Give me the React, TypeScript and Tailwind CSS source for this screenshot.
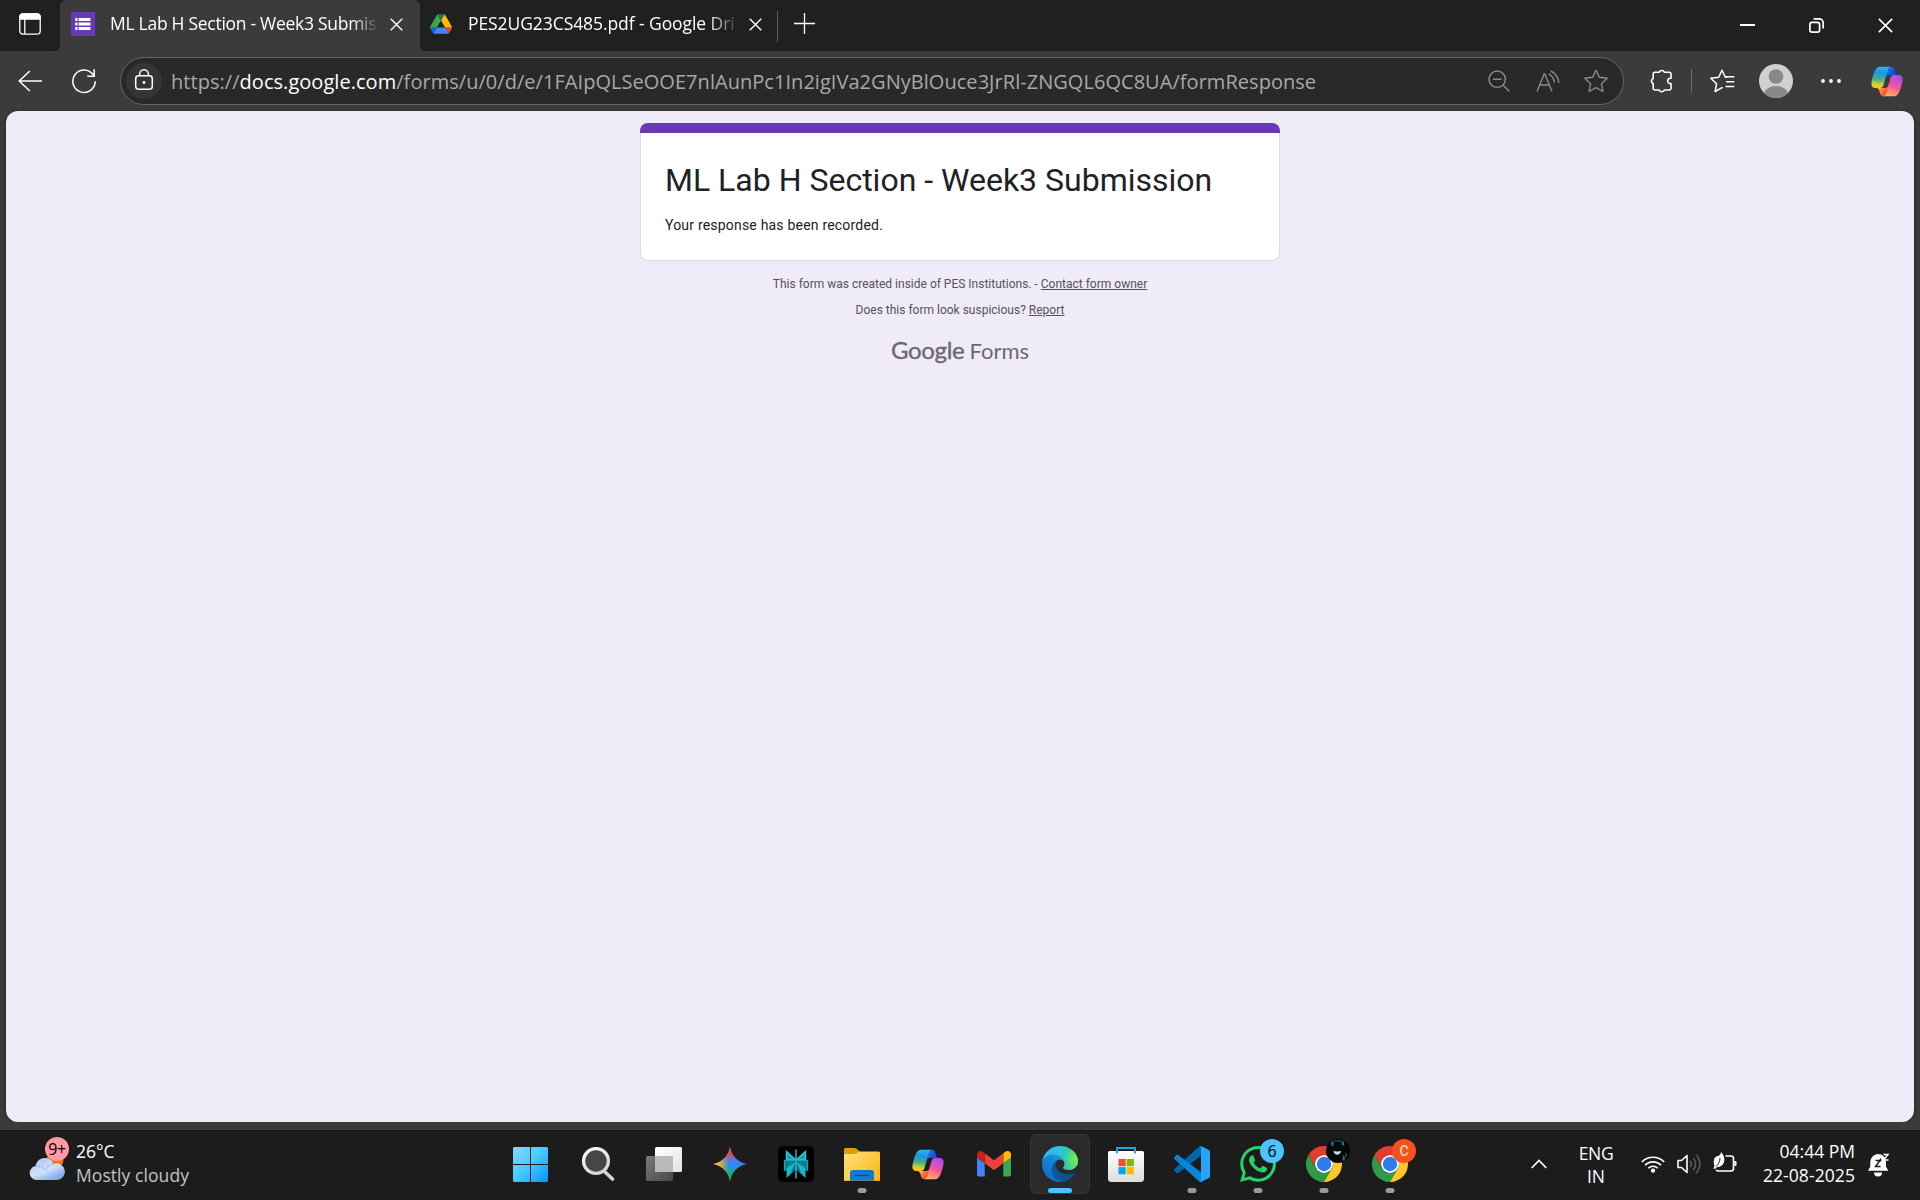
import type { ReactNode } from "react";
import { SiWhatsapp } from "react-icons/si";

const UI_FONT = "font-['Open_Sans','Noto_Sans',sans-serif]";

/* ---------- shared logos ---------- */

function CopilotLogo({ id, className }: { id: string; className: string }) {
  return (
    <svg viewBox="0 3 48 42" preserveAspectRatio="none" className={className}>
      <defs>
        <linearGradient id={`${id}a`} x1="38" y1="17" x2="25" y2="6" gradientUnits="userSpaceOnUse">
          <stop offset="0" stopColor="#1b2fc4" />
          <stop offset="0.5" stopColor="#1456e0" />
          <stop offset="1" stopColor="#2076ee" />
        </linearGradient>
        <linearGradient id={`${id}b`} x1="12" y1="33" x2="24" y2="43" gradientUnits="userSpaceOnUse">
          <stop offset="0" stopColor="#ffb657" />
          <stop offset="0.5" stopColor="#ff6b3d" />
          <stop offset="1" stopColor="#e8343c" />
        </linearGradient>
        <linearGradient id={`${id}c`} x1="16" y1="4" x2="12" y2="33" gradientUnits="userSpaceOnUse">
          <stop offset="0" stopColor="#25b8f5" />
          <stop offset="0.3" stopColor="#1d93e8" />
          <stop offset="0.6" stopColor="#46b27c" />
          <stop offset="0.85" stopColor="#d8d02e" />
          <stop offset="1" stopColor="#fcc414" />
        </linearGradient>
        <linearGradient id={`${id}d`} x1="40" y1="14" x2="28" y2="44" gradientUnits="userSpaceOnUse">
          <stop offset="0" stopColor="#9a4df2" />
          <stop offset="0.25" stopColor="#c44fd8" />
          <stop offset="0.55" stopColor="#f4569a" />
          <stop offset="0.85" stopColor="#ff8f78" />
          <stop offset="1" stopColor="#ffb266" />
        </linearGradient>
      </defs>
      <path fill={`url(#${id}a)`} d="M34.14 7.33C33.56 5.35 31.75 4 29.7 4h-1.35c-2.23 0-4.15 1.6-4.55 3.79l-2.32 12.62.57-1.97c.58-1.97 2.39-3.32 4.44-3.32h7.86l3.29 1.28 3.17-1.28h-.92c-2.06 0-3.87-1.36-4.45-3.33z" />
      <path fill={`url(#${id}b)`} d="M14.33 40.66C14.9 42.64 16.72 44 18.78 44h2.87c2.51 0 4.56-2 4.63-4.51l.31-12.16-.65 2.23c-.58 1.97-2.39 3.32-4.45 3.32h-7.92l-2.82-1.53-3.06 1.53h.91c2.07 0 3.88 1.37 4.45 3.35z" />
      <path fill={`url(#${id}c)`} d="M29.5 4H13.46C8.88 4 6.13 10.06 4.29 16.11 2.12 23.29-.72 32.89 7.5 32.89h6.93c2.07 0 3.88-1.37 4.45-3.36 1.2-4.21 3.31-11.56 4.97-17.16.84-2.84 1.54-5.29 2.62-6.81C27.07 4.71 28.08 4 29.5 4z" />
      <path fill={`url(#${id}d)`} d="M18.5 44h16.04c4.58 0 7.33-6.06 9.16-12.12 2.17-7.17 5.02-16.77-3.2-16.77h-6.93c-2.07 0-3.89 1.37-4.46 3.36-1.2 4.21-3.31 11.56-4.96 17.16-.84 2.84-1.55 5.29-2.62 6.81C20.93 43.29 19.92 44 18.5 44z" />
    </svg>
  );
}

function ChromeLogo() {
  return (
    <svg viewBox="0 0 48 48" className="size-9">
      <path fill="#e33b2e" d="M24 12H44.78A24 24 0 0 0 3.22 12L13.6 30A12 12 0 0 1 24 12z" />
      <path fill="#2f9b48" d="M13.6 30L3.22 12A24 24 0 0 0 24 48L34.39 30A12 12 0 0 1 13.6 30z" />
      <path fill="#fcc72b" d="M34.39 30L24 48A24 24 0 0 0 44.78 12H24A12 12 0 0 1 34.39 30z" />
      <circle cx="24" cy="24" r="12" fill="#fff" />
      <circle cx="24" cy="24" r="9.6" fill="#2f7bf0" />
    </svg>
  );
}

function DriveLogo() {
  return (
    <svg viewBox="0 0 87.3 78" className="h-5 w-[22px]">
      <path fill="#1967d2" d="m6.6 66.85 3.85 6.65c.8 1.4 1.95 2.5 3.3 3.3l13.75-23.8h-27.5c0 1.55.4 3.1 1.2 4.5z" />
      <path fill="#34a853" d="m43.65 25-13.75-23.8c-1.35.8-2.5 1.9-3.3 3.3l-25.4 44a9.06 9.06 0 0 0 -1.2 4.5h27.5z" />
      <path fill="#ea4335" d="m73.55 76.8c1.35-.8 2.5-1.9 3.3-3.3l1.6-2.75 7.65-13.25c.8-1.4 1.2-2.95 1.2-4.5h-27.5l5.85 11.5z" />
      <path fill="#188038" d="m43.65 25 13.75-23.8c-1.35-.8-2.9-1.2-4.5-1.2h-18.5c-1.6 0-3.15.45-4.5 1.2z" />
      <path fill="#4285f4" d="m59.8 53h-32.3l-13.75 23.8c1.35.8 2.9 1.2 4.5 1.2h50.8c1.6 0 3.15-.45 4.5-1.2z" />
      <path fill="#fbbc04" d="m73.4 26.5-12.7-22c-.8-1.4-1.95-2.5-3.3-3.3l-13.75 23.8 16.15 28h27.45c0-1.55-.4-3.1-1.2-4.5z" />
    </svg>
  );
}

function FormsFavicon() {
  return (
    <svg viewBox="0 0 24 24" className="size-6">
      <rect width="24" height="24" fill="#673ab7" />
      <g fill="#fff">
        <rect x="4.3" y="6" width="2.2" height="3" /><rect x="7.6" y="6" width="11.8" height="3" />
        <rect x="4.3" y="10.5" width="2.2" height="3" /><rect x="7.6" y="10.5" width="11.8" height="3" />
        <rect x="4.3" y="15" width="2.2" height="3" /><rect x="7.6" y="15" width="11.8" height="3" />
      </g>
    </svg>
  );
}

/* ---------- browser chrome ---------- */

function Cross({ className }: { className: string }) {
  return (
    <svg viewBox="0 0 14 14" fill="none" stroke="#fff" strokeWidth="1.5" className={className}>
      <path d="M.8.8 13.2 13.2M13.2.8.8 13.2" />
    </svg>
  );
}

function TabStrip() {
  return (
    <div className="flex h-[51px] bg-[#3b3b3b] text-[17.5px] leading-6 text-white">
      <div className="flex w-[60px] items-start rounded-br-md bg-[#202020] pt-[13px] pl-[19px] shadow-[inset_0_-1px_0_#1a1a1a]">
        <svg viewBox="0 0 22 22" fill="none" stroke="#fff" strokeWidth="1.3" className="size-[22px]">
          <rect x=".8" y=".8" width="20.4" height="20.4" rx="3.2" />
          <path d="M1 4a3 3 0 0 1 3-3h14a3 3 0 0 1 3 3v2H1z" fill="#fff" />
          <path d="M5.8 6v15" />
        </svg>
      </div>
      <div className="w-[360px] bg-[#202020]">
        <div className="flex h-[51px] rounded-t-md bg-[#3b3b3b] pl-[11px]">
          <div className="pt-3"><FormsFavicon /></div>
          <div className="ml-[15px] w-[269px] overflow-hidden whitespace-nowrap pt-[11px] tracking-[-0.28px] [mask-image:linear-gradient(to_right,#000_242px,transparent_269px)]">
            ML Lab H Section - Week3 Submission
          </div>
          <Cross className="mt-[18px] ml-[10.5px] size-[13px]" />
        </div>
      </div>
      <div className="flex flex-1 rounded-bl-md bg-[#202020] pl-[10px] shadow-[inset_0_-1px_0_#1a1a1a]">
        <div className="pt-[14px]"><DriveLogo /></div>
        <div className="ml-4 w-[267px] overflow-hidden whitespace-nowrap pt-[11px] tracking-[-0.08px] [mask-image:linear-gradient(to_right,#000_240px,transparent_272px)]">
          PES2UG23CS485.pdf - Google Drive
        </div>
        <Cross className="mt-[18px] ml-[13.5px] size-[13px]" />
        <div className="mt-[11px] ml-[15px] h-[31px] w-px bg-[#5e5e5e]" />
        <svg viewBox="0 0 21 21" stroke="#fff" strokeWidth="1.3" className="mt-[13px] ml-[16.5px] size-[21px]">
          <path d="M10.5 0v21M0 10.5h21" />
        </svg>
        <div className="ml-auto flex pt-[18px] pr-[27px]">
          <svg viewBox="0 0 15 15" className="size-[15px]"><rect y="6" width="15" height="2" fill="#fff" /></svg>
          <svg viewBox="0 0 15 15" fill="none" stroke="#fff" strokeWidth="1.7" className="ml-[54px] size-[15px]">
            <rect x=".9" y="4.4" width="9.7" height="9.7" rx="2.2" />
            <path d="M4.6.9h5.6a4 4 0 0 1 4 4v5.5" />
          </svg>
          <Cross className="ml-[54px] size-[15px]" />
        </div>
      </div>
    </div>
  );
}

function Star({ className, color }: { className: string; color: string }) {
  return (
    <svg viewBox="0 0 24 24" fill="none" stroke={color} strokeWidth="1.4" strokeLinejoin="round" className={className}>
      <path d="M12 1.2 15.3 8.3 23.2 9.3 17.4 14.7 18.9 22.5 12 18.7 5.1 22.5 6.6 14.7.8 9.3 8.7 8.3z" />
    </svg>
  );
}

function AddressBar() {
  return (
    <div className="ml-[23px] flex h-12 w-[1504px] items-center rounded-full border border-[#636363] bg-[#292929] pl-[5px]">
      <div className="flex size-9 items-center justify-center rounded-full bg-[#353535]">
        <svg viewBox="0 0 20 22" fill="none" stroke="#fff" strokeWidth="1.5" className="mb-0.5 h-[22px] w-5">
          <rect x="1.7" y="6.8" width="16.6" height="13.4" rx="3" />
          <path d="M5.6 6.8V5.2a4.4 4.4 0 0 1 8.8 0v1.6" />
          <circle cx="10" cy="13.5" r="1.4" fill="#fff" stroke="none" />
        </svg>
      </div>
      <div className="mt-0.5 ml-[9px] text-[20px] leading-7 tracking-[0.04px] whitespace-nowrap text-[#a8a8a8]">
        https://<span className="text-white">docs.google.com</span>/forms/u/0/d/e/1FAIpQLSeOOE7nlAunPc1In2igIVa2GNyBlOuce3JrRl-ZNGQL6QC8UA/formResponse
      </div>
      <div className="ml-auto flex items-center pr-[15px]">
        <svg viewBox="0 0 22 22" fill="none" stroke="#8b8b8b" strokeWidth="1.4" className="size-[22px]">
          <circle cx="9.2" cy="9.2" r="8.2" /><path d="M5 9.2h8.4M15.2 15.2 21.4 21.4" />
        </svg>
        <svg viewBox="0 0 24 22" fill="none" stroke="#8b8b8b" strokeWidth="1.4" className="ml-[26px] h-[22px] w-6">
          <path d="M1 21.5 8.2 4h.6L16 21.5M3.6 15h9.8" />
          <path d="M14.8 1c4.8 2.4 7.6 6.2 8 12M12.8 3.8c3.4 1.8 5.2 4.6 5.6 8.8" />
        </svg>
        <Star className="ml-6 size-6" color="#8b8b8b" />
      </div>
    </div>
  );
}

function Toolbar() {
  return (
    <div className="flex h-[60px] items-center bg-[#3b3b3b] pl-[18px]">
      <svg viewBox="0 0 24 22" fill="none" stroke="#fff" strokeWidth="1.5" className="h-[22px] w-6">
        <path d="M11.8 1 1.2 11 11.8 21M1.2 11H24" />
      </svg>
      <svg viewBox="0 0 26 26" fill="none" stroke="#fff" strokeWidth="1.5" className="ml-[29px] size-[26px]">
        <path d="M22.3 7A11.2 11.2 0 1 0 24.2 13.2M23.2 1.3V8.2H16.2" />
      </svg>
      <AddressBar />
      <svg viewBox="0 0 24 24" fill="none" stroke="#fff" strokeWidth="1.6" strokeLinejoin="round" className="ml-[25px] size-6">
        <path d="M6 3.2H10.2a2.8 2.8 0 0 1 5.2 0h4.8a1.8 1.8 0 0 1 1.8 1.8V9.2h-1.3a2.8 2.8 0 0 0 0 5.4h1.3v4.6a1.8 1.8 0 0 1-1.8 1.8H15.4a2.8 2.8 0 0 1-5.2 0H6a1.8 1.8 0 0 1-1.8-1.8V14.6a2.8 2.8 0 0 1 0-5.2V5a1.8 1.8 0 0 1 1.8-1.8z" />
      </svg>
      <div className="ml-[18px] h-6 w-px bg-[#6a6a6a]" />
      <svg viewBox="0 0 25 24" fill="none" stroke="#fff" strokeWidth="1.5" strokeLinejoin="round" className="ml-[18px] h-6 w-[25px]">
        <path d="M17 8.3 15.3 8.2 12 1.2 8.7 8.3.8 9.3 6.6 14.7 5.1 22.5 12 18.7 12.8 19.2" />
        <path d="M15.5 7.8H24.3M16 12.8H24.3M15.5 17.6H24.3" />
      </svg>
      <svg viewBox="0 0 34 34" className="ml-6 size-[34px]">
        <clipPath id="avatar"><circle cx="17" cy="17" r="17" /></clipPath>
        <g clipPath="url(#avatar)">
          <rect width="34" height="34" fill="#d2d0ce" />
          <circle cx="17" cy="12.5" r="7.3" fill="#8a8886" />
          <path d="M3.5 34c1-8 6.5-12 13.5-12s12.5 4 13.5 12z" fill="#8a8886" />
        </g>
      </svg>
      <svg viewBox="0 0 20 4" fill="#fff" className="ml-7 h-1 w-5">
        <circle cx="2" cy="2" r="1.9" /><circle cx="10" cy="2" r="1.9" /><circle cx="18" cy="2" r="1.9" />
      </svg>
      <CopilotLogo id="bar" className="ml-[29px] h-[31px] w-[34px]" />
    </div>
  );
}

/* ---------- page ---------- */

function FormPage() {
  return (
    <main className="mx-1.5 flex h-[1011px] flex-col items-center rounded-xl bg-[#efebf8] pt-3 font-['Roboto',sans-serif] shadow-[0_1px_4px_rgba(0,0,0,0.35)]">
      <section className="h-[138px] w-[640px] rounded-lg border border-[#dadce0] bg-white">
        <div className="-mx-px -mt-px h-[10px] rounded-t-lg bg-[#673ab7]" />
        <div className="px-6 pt-[27px]">
          <h1 className="text-[32px] leading-10 text-[#202124]">ML Lab H Section - Week3 Submission</h1>
          <p className="mt-[15px] text-sm tracking-[0.2px] text-[#202124]">Your response has been recorded.</p>
        </div>
      </section>
      <p className="mt-[15px] text-xs text-[#56525c]">
        This form was created inside of PES Institutions. - <span className="underline">Contact form owner</span>
      </p>
      <p className="mt-[10px] text-xs text-[#56525c]">
        Does this form look suspicious? <span className="underline">Report</span>
      </p>
      <div className="mt-[18px] flex items-baseline font-['Lato',sans-serif] text-[#6c6772]">
        <span className="text-2xl leading-7 tracking-[-0.3px] [-webkit-text-stroke:0.35px_#6c6772]">Google</span>
        <span className="ml-[5px] text-[22px] leading-7">Forms</span>
      </div>
    </main>
  );
}

/* ---------- taskbar ---------- */

function TaskItem({ children, indicator, active }: { children: ReactNode; indicator?: boolean; active?: boolean }) {
  return (
    <div className="flex w-[66px] justify-center">
      <div
        className={
          active
            ? "relative flex h-[60px] w-[60px] items-center justify-center rounded-md border border-[#353535] bg-[#2a2a2a]"
            : "relative flex h-[60px] w-[60px] items-center justify-center"
        }
      >
        {children}
        {indicator && <span className="absolute bottom-[1px] left-1/2 h-[5px] w-[9px] -translate-x-1/2 rounded-full bg-[#9a9a9a]" />}
        {active && <span className="absolute bottom-0 left-1/2 h-[5px] w-6 -translate-x-1/2 rounded-full bg-[#4cc2ff]" />}
      </div>
    </div>
  );
}

function StartLogo() {
  return (
    <svg viewBox="0 0 35 35" className="mr-[3px] size-[35px]">
      <defs>
        <linearGradient id="start" x1="0" y1="0" x2="35" y2="35" gradientUnits="userSpaceOnUse">
          <stop offset="0" stopColor="#85dcff" /><stop offset="0.5" stopColor="#45c8ff" /><stop offset="1" stopColor="#0a93fb" />
        </linearGradient>
      </defs>
      <path
        fill="url(#start)"
        d="M1.5 0H17V17H0V1.5A1.5 1.5 0 0 1 1.5 0zM18 0H33.5A1.5 1.5 0 0 1 35 1.5V17H18zM0 18H17V35H1.5A1.5 1.5 0 0 1 0 33.5zM18 18H35V33.5A1.5 1.5 0 0 1 33.5 35H18z"
      />
    </svg>
  );
}

function SearchLogo() {
  return (
    <svg viewBox="0 0 33 34" fill="none" className="h-[34px] w-[33px]">
      <defs>
        <linearGradient id="lens" x1="0" y1="0" x2="20" y2="34" gradientUnits="userSpaceOnUse">
          <stop offset="0" stopColor="#fff" /><stop offset="1" stopColor="#c8ccd2" />
        </linearGradient>
      </defs>
      <path d="M22.5 24.5 30.5 32" stroke="#d0d3d8" strokeWidth="3.6" strokeLinecap="round" />
      <circle cx="14" cy="14" r="12.4" fill="#464646" stroke="url(#lens)" strokeWidth="3.3" />
    </svg>
  );
}

function TaskViewLogo() {
  return (
    <svg viewBox="0 0 36 34" className="h-[34px] w-9">
      <defs>
        <linearGradient id="tvf" x1="0" y1="0" x2="1" y2="1"><stop offset="0" stopColor="#fff" /><stop offset="1" stopColor="#e3e3e3" /></linearGradient>
        <linearGradient id="tvb" x1="0" y1="0" x2="1" y2="1"><stop offset="0" stopColor="#7a7a7a" /><stop offset="1" stopColor="#484848" /></linearGradient>
      </defs>
      <rect y="9" width="27" height="25" rx="1.5" fill="url(#tvb)" />
      <rect x="9" width="27" height="25" rx="1.5" fill="url(#tvf)" />
      <path d="M9 9h18v16H10.5A1.5 1.5 0 0 1 9 23.5z" fill="#b9b9b9" />
    </svg>
  );
}

function GeminiLogo() {
  return (
    <svg viewBox="0 0 34 34" className="size-[34px]">
      <defs>
        <linearGradient id="gt" x1="17" y1="0" x2="17" y2="15" gradientUnits="userSpaceOnUse"><stop offset="0.35" stopColor="#f0434a" /><stop offset="1" stopColor="#f0434a" stopOpacity="0" /></linearGradient>
        <linearGradient id="gl" x1="0" y1="17" x2="16" y2="17" gradientUnits="userSpaceOnUse"><stop offset="0.35" stopColor="#f7bd12" /><stop offset="1" stopColor="#f7bd12" stopOpacity="0" /></linearGradient>
        <linearGradient id="gb" x1="17" y1="34" x2="17" y2="17" gradientUnits="userSpaceOnUse"><stop offset="0.3" stopColor="#12b35c" /><stop offset="1" stopColor="#12b35c" stopOpacity="0" /></linearGradient>
        <clipPath id="gs"><path d="M17 0C18.5 9 25 15.5 34 17 25 18.5 18.5 25 17 34 15.5 25 9 18.5 0 17 9 15.5 15.5 9 17 0z" /></clipPath>
      </defs>
      <g clipPath="url(#gs)">
        <rect width="34" height="34" fill="#3186ff" />
        <rect width="34" height="34" fill="url(#gb)" />
        <rect width="34" height="34" fill="url(#gl)" />
        <rect width="34" height="34" fill="url(#gt)" />
      </g>
    </svg>
  );
}

function PerplexityLogo() {
  return (
    <svg viewBox="0 0 36 36" className="size-9">
      <rect width="36" height="36" rx="5" fill="#000" />
      <path d="M6 14h12L8 25H6zM30 14H18l10 11h2z" fill="#0b7f90" />
      <path d="M8 5 18 14H8zM28 5 18 14H28z" fill="#12a3b4" />
      <path d="M18 15 8.5 22.5V32L18 23zM18 15l9.5 7.5V32L18 23z" fill="#19b7c9" />
      <path d="M18 15 13 26.5 18 23zM18 15l5 11.5L18 23z" fill="#0a6c7c" />
      <path d="M18 3.5V32.5M8.5 5.5V13.5L18 14.3 27.5 13.5V5.5L18 14.3z" fill="none" stroke="#22cfe0" strokeWidth="1.3" />
      <path d="M6.5 14.3H29.5M6.5 14.3V24.5M29.5 14.3V24.5" fill="none" stroke="#14a5b6" strokeWidth="1.2" />
    </svg>
  );
}

function ExplorerLogo() {
  return (
    <svg viewBox="0 0 36 33" className="h-[33px] w-9">
      <defs>
        <linearGradient id="fold" x1="0" y1="4" x2="36" y2="33" gradientUnits="userSpaceOnUse"><stop offset="0" stopColor="#ffe081" /><stop offset="1" stopColor="#f9b90c" /></linearGradient>
        <linearGradient id="tray" x1="0" y1="22" x2="0" y2="33" gradientUnits="userSpaceOnUse"><stop offset="0" stopColor="#1673c8" /><stop offset="1" stopColor="#0f82dc" /></linearGradient>
      </defs>
      <path d="M0 2A1.8 1.8 0 0 1 1.8 0H10c2 0 3 .8 4 2l2.5 2V8H0z" fill="#dfa003" />
      <path d="M0 6H11c2 0 3-2.5 5-2.5H34.5A1.5 1.5 0 0 1 36 5V33H0z" fill="url(#fold)" />
      <path d="M6 33V25a3 3 0 0 1 3-3H27a3 3 0 0 1 3 3v8z" fill="url(#tray)" />
      <path d="M11 27.5H25" stroke="#0a4a8c" strokeWidth="1.3" />
      <path d="M0 32.5H36" stroke="#c88d05" strokeWidth="1" opacity=".4" />
    </svg>
  );
}

function GmailLogo() {
  return (
    <svg viewBox="52 42 88 66" className="h-[25.5px] w-[34px]">
      <path fill="#4285f4" d="M58 108h14V74L52 59v43c0 3.32 2.69 6 6 6" />
      <path fill="#34a853" d="M120 108h14c3.32 0 6-2.69 6-6V59l-20 15" />
      <path fill="#fbbc04" d="M120 48v26l20-15v-8c0-7.42-8.47-11.65-14.4-7.2" />
      <path fill="#ea4335" d="M72 74V48l24 18 24-18v26L96 92" />
      <path fill="#c5221f" d="M52 51v8l20 15V48l-5.6-4.2c-5.94-4.45-14.4-.22-14.4 7.2" />
    </svg>
  );
}

const EDGE_CREST =
  "M156.94 153.78c-.81 1.05-3.3 2.5-3.3 5.66 0 2.61 1.7 5.12 4.72 7.23 14.38 10 41.49 8.68 41.56 8.68a59.56 59.56 0 0 0 30.27-8.35 61.38 61.38 0 0 0 30.43-52.88c.26-22.41-8-37.31-11.34-43.91C228.09 28.76 182.35 4.92 132.61 4.92a128 128 0 0 0-128 126.2c.48-36.54 36.8-66.05 80-66.05 3.5 0 23.46.34 42 10.07 16.34 8.58 24.9 18.94 30.85 29.21 6.18 10.67 7.28 24.15 7.28 29.52s-2.74 13.33-7.8 19.91z";

function EdgeLogo() {
  return (
    <svg viewBox="0 0 256 256" className="size-9">
      <defs>
        <linearGradient id="e1" x1="63" y1="177" x2="241" y2="177" gradientUnits="userSpaceOnUse"><stop offset="0" stopColor="#0c59a4" /><stop offset="1" stopColor="#114a8b" /></linearGradient>
        <linearGradient id="e2" x1="157" y1="100" x2="46" y2="222" gradientUnits="userSpaceOnUse"><stop offset="0" stopColor="#1b9de2" /><stop offset=".3" stopColor="#1589d8" /><stop offset="1" stopColor="#0a72d0" /></linearGradient>
        <linearGradient id="e3" x1="20" y1="60" x2="250" y2="110" gradientUnits="userSpaceOnUse"><stop offset="0" stopColor="#2fb4ec" /><stop offset=".45" stopColor="#30c2dc" /><stop offset=".75" stopColor="#34c8a4" /><stop offset="1" stopColor="#4fd47a" /></linearGradient>
        <radialGradient id="e4" cx="250" cy="95" r="90" gradientUnits="userSpaceOnUse"><stop offset="0" stopColor="#7af05a" /><stop offset=".4" stopColor="#66eb5e" stopOpacity=".75" /><stop offset="1" stopColor="#66eb6e" stopOpacity="0" /></radialGradient>
      </defs>
      <g transform="translate(-4.63 -4.92)">
        <path fill="url(#e1)" d="M235.68 195.46a93.73 93.73 0 0 1-10.54 4.71 101.87 101.87 0 0 1-35.9 6.46c-47.32 0-88.54-32.55-88.54-74.32A31.48 31.48 0 0 1 117.13 105c-42.8 1.8-53.8 46.4-53.8 72.53 0 73.88 68.09 81.37 82.76 81.37 7.91 0 19.84-2.3 27-4.56l1.31-.44a128.34 128.34 0 0 0 66.6-52.8 4 4 0 0 0-5.32-5.64z" />
        <path fill="url(#e2)" d="M110.34 246.34A79.2 79.2 0 0 1 87.6 225a80.72 80.72 0 0 1 29.53-120c3.12-1.47 8.45-4.13 15.54-4a32.35 32.35 0 0 1 25.69 13 31.88 31.88 0 0 1 6.36 18.66c0-.21 24.46-79.6-80-79.6-43.9 0-80 41.66-80 78.21a130.15 130.15 0 0 0 12.11 56 128 128 0 0 0 156.38 67.11 75.55 75.55 0 0 1-62.78-8z" />
        <path fill="url(#e3)" d={EDGE_CREST} />
        <path fill="url(#e4)" d={EDGE_CREST} />
      </g>
    </svg>
  );
}

function StoreLogo() {
  return (
    <svg viewBox="0 0 36 35" className="h-[35px] w-9">
      <defs>
        <linearGradient id="bag" x1="0" y1="4" x2="0" y2="35" gradientUnits="userSpaceOnUse"><stop offset="0" stopColor="#fff" /><stop offset="1" stopColor="#dcdcdc" /></linearGradient>
      </defs>
      <path d="M1.5 4H34.5A1.5 1.5 0 0 1 36 5.5V31.5A3.5 3.5 0 0 1 32.5 35H3.5A3.5 3.5 0 0 1 0 31.5V5.5A1.5 1.5 0 0 1 1.5 4z" fill="url(#bag)" />
      <path d="M9 6.5V1H27V6.5" fill="none" stroke="#22a7e6" strokeWidth="1.9" />
      <rect x="10.5" y="12" width="7.2" height="7.2" fill="#f25022" /><rect x="18.6" y="12" width="7.2" height="7.2" fill="#7fba00" />
      <rect x="10.5" y="20.1" width="7.2" height="7.2" fill="#00a4ef" /><rect x="18.6" y="20.1" width="7.2" height="7.2" fill="#ffb900" />
    </svg>
  );
}

function CodeLogo() {
  return (
    <svg viewBox="0 0 100 100" className="size-9">
      <path fill="#0065a9" d="M96.461 10.796 75.857.876C73.472-.273 70.622.212 68.75 2.083L1.299 63.583c-1.815 1.654-1.813 4.511.004 6.162l5.51 5.009c1.485 1.35 3.722 1.45 5.321.237L93.361 13.37C96.086 11.303 100 13.246 100 16.667v-.24c0-2.4-1.375-4.59-3.539-5.631z" />
      <path fill="#0a84d6" d="M96.461 89.204 75.857 99.125c-2.385 1.148-5.235.664-7.107-1.208L1.299 36.417c-1.815-1.654-1.813-4.511.004-6.162l5.51-5.009c1.485-1.35 3.722-1.45 5.321-.237L93.361 86.63C96.086 88.697 100 86.754 100 83.333v.24c0 2.401-1.375 4.589-3.539 5.631z" />
      <path fill="#27a4f5" d="M75.858 99.126c-2.386 1.148-5.236.663-7.108-1.209C71.056 100.223 75 98.59 75 95.328V4.672C75 1.41 71.056-.223 68.75 2.083 70.622.211 73.472-.274 75.858.874l20.601 9.907C98.623 11.822 100 14.011 100 16.413v67.174c0 2.402-1.377 4.592-3.541 5.633z" />
    </svg>
  );
}

function Taskbar() {
  return (
    <footer className="flex h-[70px] border-b border-[#2a1820] bg-[#1c1c1c] text-[17.5px] text-white">
      <div className="flex w-[499px] pl-[29px]">
        <div className="relative h-full w-9 pt-[27px]">
          <svg viewBox="0 0 36 23" className="h-[23px] w-9">
            <defs>
              <linearGradient id="cloud" x1="10" y1="0" x2="20" y2="23" gradientUnits="userSpaceOnUse"><stop offset="0" stopColor="#a9c6f3" /><stop offset=".6" stopColor="#d3e1f9" /><stop offset="1" stopColor="#8aaeec" /></linearGradient>
            </defs>
            <circle cx="26" cy="3" r="8.5" fill="#f0730c" />
            <path d="M7.5 23A7 7 0 0 1 6.5 9.1 9.5 9.5 0 0 1 20 1.8 9 9 0 0 1 24.5 7 8.3 8.3 0 1 1 28 23z" fill="url(#cloud)" />
            <path d="M6.5 9.2c5-.6 8.5 1.3 10 4.3C18 9.8 20.5 7.5 24.5 7" fill="none" stroke="#8fb1ec" strokeWidth=".8" />
          </svg>
          <span className="absolute top-[7px] left-4 flex size-6 items-center justify-center rounded-full bg-[#ff99a4] text-base leading-none tracking-[-0.3px] text-black">9+</span>
        </div>
        <div className="ml-[11px] pt-[9px] leading-6">
          <div>26°C</div>
          <div className="tracking-[0.07px] text-[#c4c4c4]">Mostly cloudy</div>
        </div>
      </div>

      <div className="flex pt-1">
        <TaskItem><StartLogo /></TaskItem>
        <TaskItem><SearchLogo /></TaskItem>
        <TaskItem><TaskViewLogo /></TaskItem>
        <TaskItem><GeminiLogo /></TaskItem>
        <TaskItem><PerplexityLogo /></TaskItem>
        <TaskItem indicator><ExplorerLogo /></TaskItem>
        <TaskItem><CopilotLogo id="task" className="h-[31px] w-[34px]" /></TaskItem>
        <TaskItem><GmailLogo /></TaskItem>
        <TaskItem active><EdgeLogo /></TaskItem>
        <TaskItem><StoreLogo /></TaskItem>
        <TaskItem indicator><CodeLogo /></TaskItem>
        <TaskItem indicator>
          <SiWhatsapp className="size-9 text-[#25d366]" />
          <span className="absolute top-[5px] right-1 flex size-6 items-center justify-center rounded-full bg-[#4cc2ff] text-base leading-none text-black">6</span>
        </TaskItem>
        <TaskItem indicator>
          <ChromeLogo />
          <svg viewBox="0 0 24 24" className="absolute top-[5px] right-1 size-6">
            <circle cx="12" cy="12" r="12" fill="#050708" />
            <path d="M5 4 6.5 1.5 8 5 6 8zM15.5 1.5 17.5 2.5 18.5 7 16 6zM17 16l2 2-.5 4-2-1zM19 13l2 3-1 3zM8 1.5h7v1H8z" fill="#1f7a86" />
            <path d="M7.5 12c2 .5 5.5.5 7.5 0-.3 2.6-1.8 3.7-3.7 3.7S7.8 14.6 7.5 12z" fill="#b8e6ea" />
          </svg>
        </TaskItem>
        <TaskItem indicator>
          <ChromeLogo />
          <span className="absolute top-[5px] right-1 flex size-6 items-center justify-center rounded-full bg-[#f4511e] font-['Roboto',sans-serif] text-sm font-medium leading-none text-[#ffd0bd]">C</span>
        </TaskItem>
      </div>

      <div className="flex flex-1 pl-[108px]">
        <svg viewBox="0 0 16 10" fill="none" stroke="#fff" strokeWidth="1.7" className="mt-[29px] h-[10px] w-4"><path d="M.7 9 8 1.5 15.3 9" /></svg>
        <div className="mt-[12px] ml-[27px] w-[44px] text-center leading-[23px]">
          <div className="tracking-[-0.3px]">ENG</div>
          <div>IN</div>
        </div>
        <svg viewBox="0 0 24 18" fill="none" stroke="#fff" strokeWidth="1.6" className="mt-[25px] ml-[23px] h-[18px] w-6">
          <path d="M.8 7A15.5 15.5 0 0 1 23.2 7M4 10.3a11 11 0 0 1 16 0M7.3 13.3a6.5 6.5 0 0 1 9.4 0" />
          <circle cx="12" cy="15.7" r="2.1" fill="#fff" stroke="none" />
        </svg>
        <svg viewBox="0 0 24 20" fill="none" stroke="#fff" strokeWidth="1.6" strokeLinejoin="round" className="mt-[24px] ml-3 h-5 w-6">
          <path d="M1 6.5H4.5L10 1.5V18.5L4.5 13.5H1z" />
          <g stroke="#5c5c5c"><path d="M13 6.8a4.5 4.5 0 0 1 0 6.4" /><path d="M16 4a8.3 8.3 0 0 1 0 12M19 1a12.5 12.5 0 0 1 0 18" /></g>
        </svg>
        <svg viewBox="0 0 24 20" fill="none" stroke="#fff" strokeWidth="1.6" className="mt-[22px] ml-3 h-5 w-6">
          <path d="M12.5 4H18a2.5 2.5 0 0 1 2.5 2.5V16.5A2.5 2.5 0 0 1 18 19H5.5a3.5 3.5 0 0 1-2.5-1" />
          <path d="M21.3 9H22.5a1 1 0 0 1 1 1v3a1 1 0 0 1-1 1H21.3z" fill="#fff" stroke="none" />
          <path d="M8 0c2.8 3 4.2 6.5 2.8 10.5C9.8 13.5 7 15.3 4 15 3 16.5 2 17 .5 16.8 0 16.5.8 15.8 1.5 14 -.5 8.5 1.5 4.5 5 4 6.8 3.5 7.8 2 8 0z" fill="#fff" stroke="none" />
          <path d="M7 6C7 9.5 5.5 12 3.2 14.5" stroke="#1c1c1c" strokeWidth="1" />
        </svg>
        <div className="ml-auto pt-[9px] text-right leading-6">
          <div>04:44 PM</div>
          <div className="tracking-[0.08px]">22-08-2025</div>
        </div>
        <svg viewBox="0 0 22 24" className="mt-[23px] mr-[30px] ml-[13px] h-6 w-[22px]">
          <path d="M10 1a8 8 0 0 1 8 8v4.5l2.3 4.2H0L2.3 13.5V9A8 8 0 0 1 10 1zM6 19.5H14a4 4 0 0 1-8 0z" fill="#fff" />
          <path d="M13 0H22V8H17V4z" fill="#1c1c1c" />
          <path d="M15.3 1.5H20L15.5 7H20.5" fill="none" stroke="#fff" strokeWidth="1.5" />
          <path d="M7.5 7.5H12L7.5 13.5H12.5M12.5 5.5v3" fill="none" stroke="#1c1c1c" strokeWidth="1.5" />
        </svg>
      </div>
    </footer>
  );
}

export default function App() {
  return (
    <div className={`h-[1200px] w-[1920px] overflow-hidden bg-[#3b3b3b] ${UI_FONT}`}>
      <TabStrip />
      <Toolbar />
      <FormPage />
      <div className="h-2 bg-[#3b3b3b]" />
      <Taskbar />
    </div>
  );
}
